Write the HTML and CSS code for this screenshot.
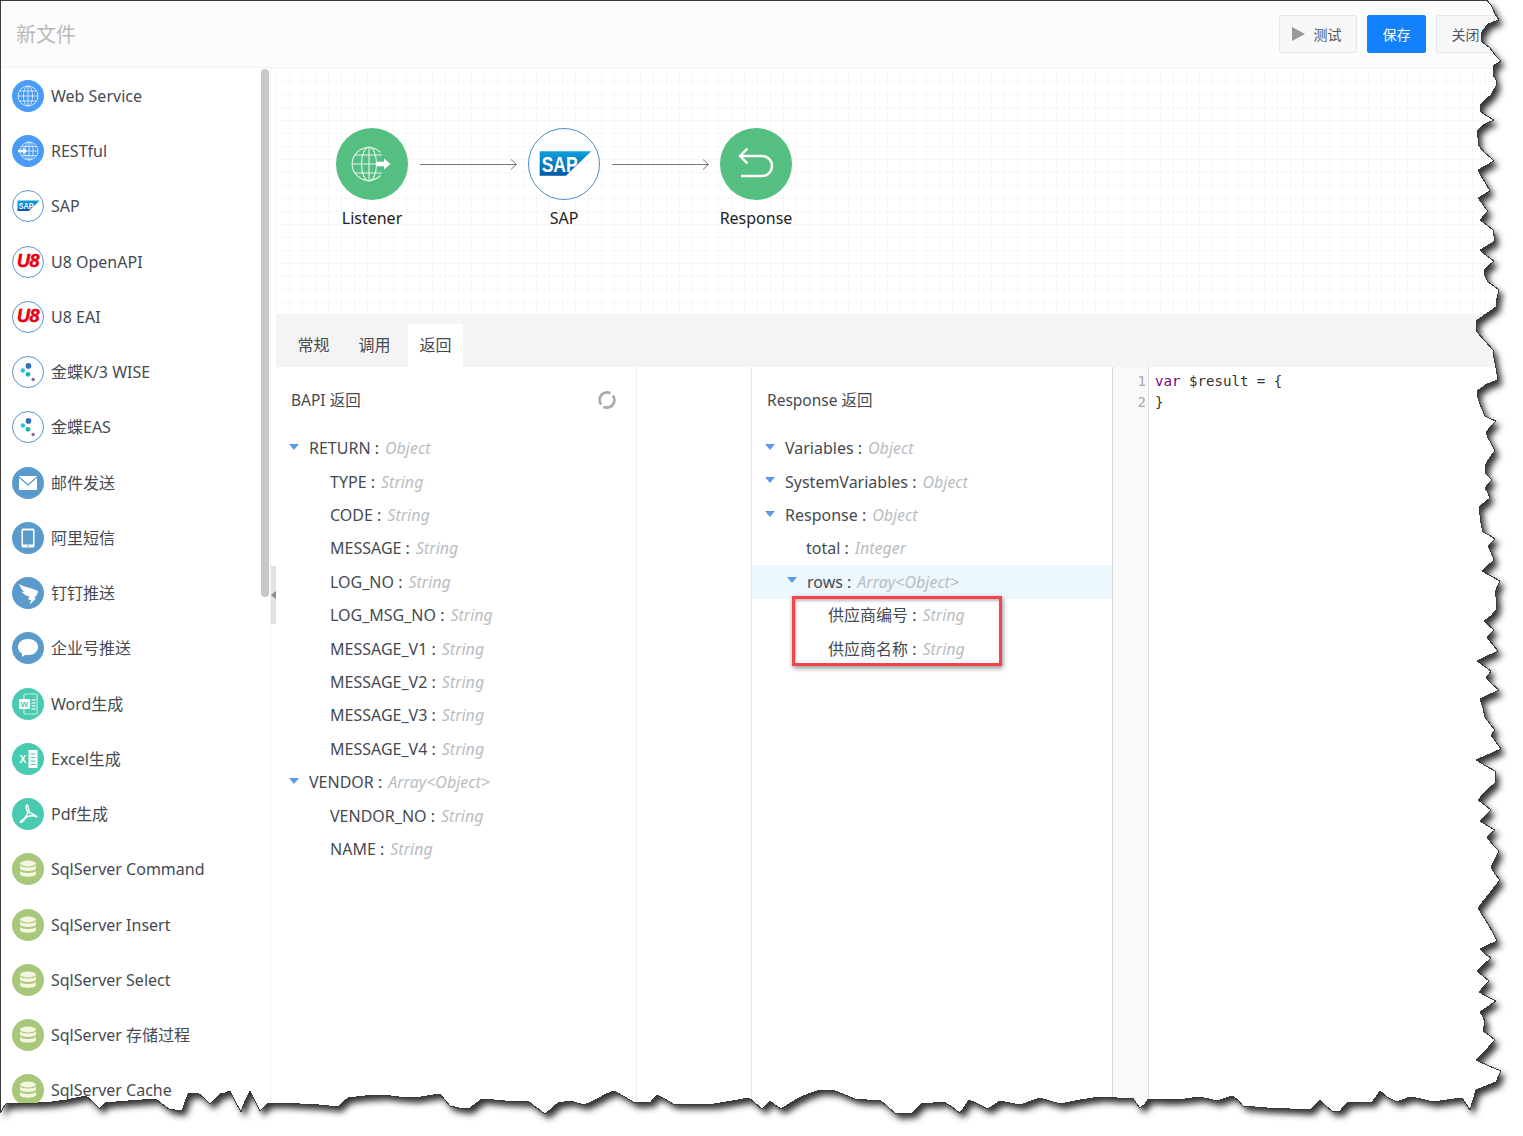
FILE: index.html
```html
<!DOCTYPE html>
<html lang="zh-CN">
<head>
<meta charset="utf-8">
<title>新文件</title>
<link rel="stylesheet" href="styles.css">
</head>
<body>
<svg class="defs" width="0" height="0" aria-hidden="true">
  <defs>
    <linearGradient id="sapfill" x1="0" y1="0" x2="0" y2="1">
      <stop offset="0" stop-color="#0fa0dc"/>
      <stop offset="1" stop-color="#0058a8"/>
    </linearGradient>
    <symbol id="i-globe" viewBox="0 0 32 32">
      <g fill="none" stroke="#e8f2ff" stroke-width=".8">
        <circle cx="16" cy="16" r="10"/><ellipse cx="16" cy="16" rx="4.6" ry="10"/>
        <path d="M16 6V26M6 16H26M7.300 11H24.700M7.300 21H24.700"/>
      </g>
    </symbol>
    <symbol id="i-rest" viewBox="0 0 32 32">
      <g fill="none" stroke="#e8f2ff" stroke-width=".8">
        <circle cx="17" cy="16" r="9"/><ellipse cx="17" cy="16" rx="4.200" ry="9"/>
        <path d="M17 7V25M8 16H26M9.300 11.500H24.700M9.300 20.500H24.700"/>
      </g>
      <path d="M6 14.800H11V12.500L15 16L11 19.500V17.200H6Z" fill="#fff"/>
    </symbol>
    <symbol id="i-sap" viewBox="0 0 72 72">
      <path d="M11 23H64L38 48H11Z" fill="url(#sapfill)"/>
      <text x="13" y="44" class="sap-text" textLength="37" lengthAdjust="spacingAndGlyphs">SAP</text>
    </symbol>
    <symbol id="i-kd" viewBox="0 0 32 32">
      <circle cx="16.500" cy="9.500" r="3" fill="#2f6fc0"/>
      <circle cx="10.500" cy="14.500" r="2.400" fill="#2dc0e0"/>
      <circle cx="16" cy="18.500" r="2.600" fill="#1cb3a8"/>
      <circle cx="21.500" cy="24" r="1.800" fill="#8a64b8"/>
    </symbol>
    <symbol id="i-mail" viewBox="0 0 32 32">
      <path d="M7 9H25V23H7Z" fill="#fff"/>
      <path d="M7 10L16 18L25 10" fill="none" stroke="#5a9bcb" stroke-width="1.200"/>
    </symbol>
    <symbol id="i-phone" viewBox="0 0 32 32">
      <rect x="9.500" y="6.500" width="13" height="19" rx="1.500" fill="#fff"/>
      <rect x="11" y="8.500" width="10" height="14" fill="#5a9bcb"/>
      <circle cx="16" cy="24" r=".8" fill="#5a9bcb"/>
    </symbol>
    <symbol id="i-ding" viewBox="0 0 32 32">
      <path d="M7 7C12 10 20 11 26 14C26 17 24 19 22 21L24 21.500L18 27.500L19 23L16 22.500L17.500 19.500C14 19 10 16 9.500 14.500L13 15C10 13.500 8 10 7 7Z" fill="#fff"/>
    </symbol>
    <symbol id="i-chat" viewBox="0 0 32 32">
      <path d="M16 7C22 7 26 10.500 26 15C26 19.500 22 23 16.500 23C15.500 23 14.500 23 13.500 22.700L10 25V21.500C7.500 20 6 17.700 6 15C6 10.500 10 7 16 7Z" fill="#fff"/>
    </symbol>
    <symbol id="i-word" viewBox="0 0 32 32">
      <rect x="12" y="6" width="13" height="20" rx="1" fill="none" stroke="#bff0e2" stroke-width="1.200"/>
      <rect x="7" y="11" width="11" height="10" fill="#fff"/>
      <text x="8.500" y="19" class="doc-text">W</text>
      <path d="M19.500 12H23.500M19.500 15H23.500M19.500 18H23.500M19.500 21H23.500" stroke="#d8f6ee" stroke-width="1.400"/>
    </symbol>
    <symbol id="i-excel" viewBox="0 0 32 32">
      <path d="M16.500 7H25.500V25H16.500Z" fill="#fff"/>
      <path d="M18.500 11H23.500M18.500 14.500H23.500M18.500 18H23.500M18.500 21.500H23.500" stroke="#48cbb0" stroke-width="1.200"/>
      <text x="7.500" y="19.500" class="xls-text">X</text>
    </symbol>
    <symbol id="i-pdf" viewBox="0 0 32 32">
      <path d="M15 7C13.500 7 14 11 16 15C14 19 11 22 8 24C9.500 26 12 21 15.500 18.500C19 17.500 22 17.500 25 19C23 16.500 19.500 15.500 17.500 14.500C16.500 12 16.500 7 15 7Z" fill="none" stroke="#fff" stroke-width="1.500" stroke-linejoin="round"/>
    </symbol>
    <symbol id="i-db" viewBox="0 0 32 32">
      <g fill="#f4f6df">
        <ellipse cx="16" cy="10.500" rx="8" ry="3"/>
        <path d="M8 12.500C10 15 22 15 24 12.500V16C22 18.500 10 18.500 8 16Z"/>
        <path d="M8 18C10 20.500 22 20.500 24 18V21.500C22 24.500 10 24.500 8 21.500Z"/>
      </g>
    </symbol>
  </defs>
</svg>

<div class="app">
  <header class="topbar">
    <h1 class="doc-title">新文件</h1>
    <div class="actions">
      <button class="btn btn-test"><svg class="play" viewBox="0 0 13 14"><path d="M0 0L13 7L0 14Z"/></svg>测试</button>
      <button class="btn btn-save">保存</button>
      <button class="btn btn-close">关闭</button>
    </div>
  </header>

  <div class="main">
    <aside class="sidebar">
      <ul class="tools">
        <li class="tool"><svg class="ico web"><use href="#i-globe"/></svg><span>Web Service</span></li>
        <li class="tool"><svg class="ico web"><use href="#i-rest"/></svg><span>RESTful</span></li>
        <li class="tool"><svg class="ico ring"><use href="#i-sap"/></svg><span>SAP</span></li>
        <li class="tool"><span class="ico ring u8">U8</span><span>U8 OpenAPI</span></li>
        <li class="tool"><span class="ico ring u8">U8</span><span>U8 EAI</span></li>
        <li class="tool"><svg class="ico ring"><use href="#i-kd"/></svg><span>金蝶K/3 WISE</span></li>
        <li class="tool"><svg class="ico ring"><use href="#i-kd"/></svg><span>金蝶EAS</span></li>
        <li class="tool"><svg class="ico msg"><use href="#i-mail"/></svg><span>邮件发送</span></li>
        <li class="tool"><svg class="ico msg"><use href="#i-phone"/></svg><span>阿里短信</span></li>
        <li class="tool"><svg class="ico msg"><use href="#i-ding"/></svg><span>钉钉推送</span></li>
        <li class="tool"><svg class="ico msg"><use href="#i-chat"/></svg><span>企业号推送</span></li>
        <li class="tool"><svg class="ico doc"><use href="#i-word"/></svg><span>Word生成</span></li>
        <li class="tool"><svg class="ico doc"><use href="#i-excel"/></svg><span>Excel生成</span></li>
        <li class="tool"><svg class="ico doc"><use href="#i-pdf"/></svg><span>Pdf生成</span></li>
        <li class="tool"><svg class="ico sql"><use href="#i-db"/></svg><span>SqlServer Command</span></li>
        <li class="tool"><svg class="ico sql"><use href="#i-db"/></svg><span>SqlServer Insert</span></li>
        <li class="tool"><svg class="ico sql"><use href="#i-db"/></svg><span>SqlServer Select</span></li>
        <li class="tool"><svg class="ico sql"><use href="#i-db"/></svg><span>SqlServer 存储过程</span></li>
        <li class="tool"><svg class="ico sql"><use href="#i-db"/></svg><span>SqlServer Cache</span></li>
      </ul>
      <div class="scrollthumb"></div>
    </aside>
    <div class="rail"><div class="rail-handle"><i class="rail-arrow"></i></div></div>

    <div class="content">
      <section class="canvas">
        <div class="node">
          <svg class="node-ico green" viewBox="0 0 72 72">
            <g fill="none" stroke="#e6f6ec" stroke-width="1.100">
              <path d="M44.500 24.500A16.500 16.500 0 1 0 44.500 47.500"/>
              <ellipse cx="33" cy="36" rx="7.500" ry="17"/>
              <path d="M33 19V53M16.500 36H41M19 27H46M19 45H46"/>
            </g>
            <path d="M40 33.800H48V30.500L54.500 36L48 41.500V38.200H40Z" fill="#fff"/>
          </svg>
          <span class="node-label">Listener</span>
        </div>
        <svg class="link" viewBox="0 0 120 12"><path d="M12 6.500H108M103 1.500L108.500 6.500L103 11.500" fill="none" stroke="#777" stroke-width="1"/></svg>
        <div class="node">
          <svg class="node-ico sap-node" viewBox="0 0 72 72"><use href="#i-sap"/></svg>
          <span class="node-label">SAP</span>
        </div>
        <svg class="link" viewBox="0 0 120 12"><path d="M12 6.500H108M103 1.500L108.500 6.500L103 11.500" fill="none" stroke="#777" stroke-width="1"/></svg>
        <div class="node">
          <svg class="node-ico green" viewBox="0 0 72 72">
            <path d="M20 28H42a10 10 0 0 1 0 20H21M27.500 20.500L20 28L27.500 35.500" fill="none" stroke="#fff" stroke-width="2.400"/>
          </svg>
          <span class="node-label">Response</span>
        </div>
      </section>

      <nav class="tabs">
        <span class="tab">常规</span>
        <span class="tab">调用</span>
        <span class="tab active">返回</span>
      </nav>

      <div class="panels">
        <section class="panel panel-left">
          <div class="panel-head">
            <span>BAPI 返回</span>
            <svg class="spin" viewBox="0 0 20 20"><g fill="none" stroke="#aaa" stroke-width="2.800"><path d="M13.500 3.200A7.500 7.500 0 0 0 4.200 14.500"/><path d="M6.500 16.800A7.500 7.500 0 0 0 15.800 5.500"/></g></svg>
          </div>
          <ul class="tree">
            <li class="row lv0"><i class="caret"></i>RETURN :<em>Object</em></li>
            <li class="row lv1">TYPE :<em>String</em></li>
            <li class="row lv1">CODE :<em>String</em></li>
            <li class="row lv1">MESSAGE :<em>String</em></li>
            <li class="row lv1">LOG_NO :<em>String</em></li>
            <li class="row lv1">LOG_MSG_NO :<em>String</em></li>
            <li class="row lv1">MESSAGE_V1 :<em>String</em></li>
            <li class="row lv1">MESSAGE_V2 :<em>String</em></li>
            <li class="row lv1">MESSAGE_V3 :<em>String</em></li>
            <li class="row lv1">MESSAGE_V4 :<em>String</em></li>
            <li class="row lv0"><i class="caret"></i>VENDOR :<em>Array&lt;Object&gt;</em></li>
            <li class="row lv1">VENDOR_NO :<em>String</em></li>
            <li class="row lv1">NAME :<em>String</em></li>
          </ul>
        </section>
        <div class="panel-gap"></div>
        <section class="panel panel-right">
          <div class="panel-head"><span>Response 返回</span></div>
          <ul class="tree">
            <li class="row lv0"><i class="caret"></i>Variables :<em>Object</em></li>
            <li class="row lv0"><i class="caret"></i>SystemVariables :<em>Object</em></li>
            <li class="row lv0"><i class="caret"></i>Response :<em>Object</em></li>
            <li class="row lv1">total :<em>Integer</em></li>
            <li class="row lv1-open selected"><i class="caret"></i>rows :<em>Array&lt;Object&gt;</em></li>
            <li class="row lv2">供应商编号 :<em>String</em></li>
            <li class="row lv2">供应商名称 :<em>String</em></li>
          </ul>
          <div class="callout"></div>
        </section>
        <section class="editor">
          <div class="gutter"><div>1</div><div>2</div></div>
          <div class="code">
            <div class="code-line"><span class="kw">var</span><span>$result = {</span></div>
            <div class="code-line"><span>}</span></div>
          </div>
        </section>
      </div>
    </div>
  </div>
</div>

<svg class="torn" viewBox="0 0 1523 1136" aria-hidden="true">
  <defs>
    <path id="paper" d="M.5 .5H1487L1491 5L1493 9L1495 14L1499 20L1488 24L1484 29L1481 34L1481 41L1485 44L1490 48L1495 55L1501 61L1493 66L1494 71L1493 75L1496 80L1496 86L1491 95L1485 100L1480 105L1481 112L1487 116L1494 120L1483 125L1477 131L1478 138L1478 145L1486 154L1490 157L1494 161L1478 170L1481 176L1485 182L1490 191L1478 198L1482 203L1486 209L1488 211L1480 220L1487 225L1493 230L1495 241L1480 250L1487 256L1494 261L1484 270L1485 276L1488 282L1494 286L1499 290L1497 298L1496 307L1486 314L1476 321L1477 332L1485 341L1493 350L1494 358L1496 368L1498 380L1487 384L1477 391L1478 398L1480 404L1485 416L1491 419L1496 421L1486 432L1488 438L1491 443L1495 451L1490 457L1486 464L1485 473L1492 480L1485 488L1488 493L1490 498L1479 507L1480 515L1481 523L1483 532L1489 535L1495 539L1488 546L1491 552L1493 557L1494 560L1482 571L1491 576L1500 581L1495 592L1497 601L1496 610L1491 616L1484 621L1494 630L1487 637L1493 645L1498 651L1477 661L1484 666L1491 671L1486 678L1492 684L1499 690L1480 699L1483 708L1485 717L1490 724L1495 730L1491 735L1496 742L1501 749L1476 760L1486 766L1495 771L1495 783L1486 791L1478 800L1485 805L1491 810L1480 821L1488 826L1495 830L1487 837L1493 845L1499 851L1495 859L1491 867L1495 874L1500 880L1489 894L1478 908L1483 916L1488 924L1493 933L1497 941L1480 949L1485 954L1491 958L1477 971L1483 976L1489 981L1479 992L1488 997L1496 1001L1480 1012L1483 1017L1485 1022L1483 1031L1489 1035L1495 1040L1486 1050L1476 1060L1489 1066L1501 1071L1496 1082L1476 1090L1473 1100L1470 1110L1462 1098L1447 1100L1433 1102L1421 1099L1410 1097L1397 1102L1387 1097L1380 1091L1376 1097L1372 1102L1357 1102L1347 1103L1340 1111L1332 1111L1326 1106L1320 1100L1315 1105L1310 1110L1290 1109L1267 1108L1243 1106L1238 1100L1232 1096L1217 1101L1200 1097L1185 1099L1170 1100L1148 1099L1145 1104L1140 1108L1136 1103L1133 1098L1117 1098L1100 1097L1080 1100L1060 1104L1040 1098L1020 1105L1000 1101L988 1109L978 1104L969 1100L965 1106L960 1113L952 1107L944 1102L933 1103L922 1103L917 1108L912 1113L896 1114L888 1107L880 1100L867 1100L855 1099L845 1095L835 1091L820 1090L808 1094L797 1099L789 1104L781 1109L775 1105L770 1101L766 1105L762 1109L755 1103L749 1098L732 1101L714 1104L694 1104L673 1104L665 1099L657 1095L654 1098L651 1102L635 1103L625 1097L614 1091L606 1094L599 1098L591 1102L584 1105L577 1103L571 1101L558 1103L551 1109L545 1114L537 1108L529 1102L505 1101L482 1099L475 1104L469 1109L459 1108L450 1106L445 1100L440 1094L427 1096L415 1098L399 1097L383 1095L365 1096L348 1098L343 1102L338 1107L319 1105L300 1104L284 1103L268 1103L264 1107L260 1111L255 1101L250 1091L245 1101L241 1112L235 1101L230 1091L225 1093L220 1094L215 1099L210 1104L204 1098L198 1093L188 1094L185 1102L182 1111L175 1110L169 1109L162 1104L156 1099L142 1100L128 1101L116 1102L105 1103L102 1106L100 1109L93 1102L86 1096L76 1098L67 1100L52 1102L38 1103L22 1103L6 1104L3 1108L.5 1113Z"/>
    <mask id="outside" maskUnits="userSpaceOnUse" x="0" y="0" width="1523" height="1136">
      <rect width="1523" height="1136" fill="#fff"/>
      <use href="#paper" fill="#000"/>
    </mask>
    <filter id="blur" x="-5%" y="-5%" width="110%" height="110%"><feGaussianBlur stdDeviation="3"/></filter>
  </defs>
  <g mask="url(#outside)">
    <rect width="1523" height="1136" fill="#fff"/>
    <use href="#paper" fill="#333" transform="translate(4 5)" filter="url(#blur)"/>
  </g>
  <use class="edge" href="#paper" fill="none" stroke="#3a3a3a" stroke-width="1"/>
</svg>
</body>
</html>
```
FILE: styles.css
```css
* { box-sizing: border-box; }
html, body { margin: 0; padding: 0; background: #fff; }
body {
  position: relative;
  width: 1523px;
  height: 1136px;
  overflow: hidden;
  font-family: "Noto Sans", "Noto Sans CJK SC", sans-serif;
  font-size: 16px;
  line-height: 22px;
  color: #454a52;
}
ul { list-style: none; margin: 0; padding: 0; }
.defs { position: absolute; }
.sap-text { font: bold 23px "Liberation Sans", sans-serif; fill: #fff; }
.doc-text { font: bold 8px "Liberation Sans", sans-serif; fill: #48cbb0; }
.xls-text { font: bold 10px "Liberation Sans", sans-serif; fill: #fff; }

.app { display: flex; flex-direction: column; height: 1136px; }

.topbar {
  flex: none;
  height: 68px;
  padding: 14px 28px 0 16px;
  display: flex;
  justify-content: space-between;
  align-items: flex-start;
  background: #fcfcfc;
  border-bottom: 1px solid #f3f3f3;
}
.doc-title { margin: 6px 0 0; font-size: 20px; font-weight: 400; line-height: 30px; color: #b9b9b9; }
.actions { display: flex; gap: 10px; margin-top: 1px; }
.btn {
  height: 38px;
  padding: 0;
  border: 1px solid #e6e7e9;
  border-radius: 2px;
  background: #f7f8fa;
  color: #555;
  font: 14px "Noto Sans CJK SC", sans-serif;
  display: flex;
  align-items: center;
  justify-content: center;
}
.btn-test { width: 78px; gap: 9px; padding-right: 3px; }
.play { width: 13px; height: 14px; fill: #999; }
.btn-save { width: 59px; background: #1182fb; border-color: #1182fb; color: #fff; }
.btn-close { width: 59px; }

.main { flex: 1; display: flex; min-height: 0; }

.sidebar { position: relative; flex: none; width: 271px; border-right: 1px solid #f3f3f3; overflow: hidden; }
.tools { padding-top: .3px; }
.tool { display: flex; align-items: center; height: 55.250px; padding-left: 12px; gap: 7px; white-space: nowrap; }
.ico { flex: none; width: 32px; height: 32px; border-radius: 50%; }
.web { background: #4a9bf6; }
.msg { background: #5a9bcb; }
.doc { background: #48cbb0; }
.sql { background: #a7c77a; }
.ring { background: #fff; border: 1px solid #5c96cc; }
.u8 {
  display: flex;
  align-items: center;
  justify-content: center;
  font: italic bold 18px "Liberation Sans", sans-serif;
  letter-spacing: -.5px;
  color: #e60012;
  -webkit-text-stroke: .5px #e60012;
}
.scrollthumb { position: absolute; left: 261px; top: 1px; width: 8px; height: 528px; border-radius: 4px; background: #c8c8c8; }

.rail { flex: none; width: 5px; }
.rail-handle { width: 5px; height: 58px; margin-top: 498px; background: #e2e2e2; display: flex; align-items: center; }
.rail-arrow { border: 4px solid transparent; border-left: 0; border-right: 5px solid #8a8a8a; }

.content { flex: 1; min-width: 0; display: flex; flex-direction: column; }

.canvas {
  flex: none;
  height: 246px;
  padding: 60px 0 0 60px;
  display: flex;
  align-items: flex-start;
  background-color: #fff;
  background-image:
    repeating-linear-gradient(to right, #f7f7f7 0 1px, transparent 1px 13px),
    repeating-linear-gradient(to bottom, #f7f7f7 0 1px, transparent 1px 13px);
}
.node { flex: none; width: 72px; display: flex; flex-direction: column; align-items: center; gap: 6px; }
.node-ico { width: 72px; height: 72px; border-radius: 50%; display: block; }
.green { background: #55bf82; }
.sap-node { background: #fff; border: 1px solid #4a8ccb; }
.node-label { color: #222; line-height: 24px; white-space: nowrap; }
.link { flex: none; width: 120px; height: 12px; margin-top: 30px; }

.tabs { flex: none; height: 53px; padding: 10px 0 0 10px; display: flex; gap: 6px; background: #f4f4f4; }
.tab { flex: none; width: 55px; height: 43px; padding-bottom: 2px; display: flex; align-items: center; justify-content: center; color: #454a52; }
.tab.active { background: #fff; }

.panels { flex: 1; display: flex; min-height: 0; }
.panel { flex: none; position: relative; }
.panel-left { width: 361px; border-right: 1px solid #eee; }
.panel-gap { flex: none; width: 114px; }
.panel-right { width: 362px; border-left: 1px solid #e6e6e6; border-right: 1px solid #d8d8d8; }
.panel-head { height: 64.600px; padding: 2px 19px 0 15px; display: flex; align-items: center; justify-content: space-between; font-size: 15.500px; }
.spin { width: 20px; height: 20px; margin-top: -1px; }

.row { height: 33.400px; display: flex; align-items: center; white-space: nowrap; }
.row em { margin-left: 6px; color: #b9bdc2; font-style: italic; }
.lv0 { padding-left: 13px; }
.lv1 { padding-left: 54px; }
.lv1-open { padding-left: 35px; }
.lv2 { padding-left: 76px; }
.caret { flex: none; width: 0; height: 0; margin-right: 10px; margin-top: -3px; border: 5.500px solid transparent; border-top: 6px solid #5a9be8; border-bottom: 0; }
.selected { background: #ecf7fe; }
.callout {
  position: absolute;
  left: 40px;
  top: 229px;
  width: 210px;
  height: 70px;
  border: 3px solid #f4444a;
  box-shadow: 1px 2px 5px rgba(0, 0, 0, .45), inset 1px 2px 3px rgba(0, 0, 0, .25);
}

.editor { flex: 1; min-width: 0; display: flex; font: 14.100px/21px "DejaVu Sans Mono", monospace; }
.gutter { flex: none; width: 36px; padding: 4px 2px 0 0; text-align: right; color: #aaa; background: #f8f9fb; border-right: 1px solid #ddd; }
.code { padding: 4px 0 0 6px; color: #333; }
.code-line { display: flex; gap: 8.500px; white-space: pre; }
.kw { color: #708; }

.torn { position: absolute; left: 0; top: 0; width: 1523px; height: 1136px; pointer-events: none; }
.edge { shape-rendering: crispEdges; }
```
